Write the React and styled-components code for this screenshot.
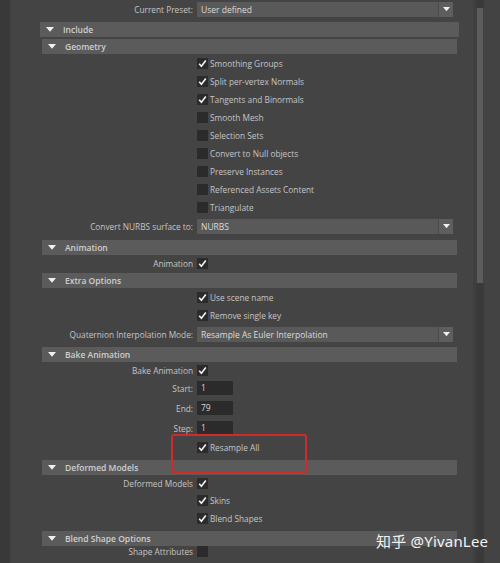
import React from "react";
import styled, { createGlobalStyle } from "styled-components";

const Global = createGlobalStyle`
  html, body { margin: 0; padding: 0; background: #444444; }
  body { font-family: "Open Sans", "Noto Sans", sans-serif; }
  * { box-sizing: border-box; }
`;

const Frame = styled.div`
  position: relative;
  width: 500px;
  height: 563px;
  display: flex;
  overflow: hidden;
  background: #444444;
`;

const LeftEdge = styled.div`
  width: 12px;
  flex: none;
  background: #393939;
  border-right: 2px solid #424242;
`;

const Main = styled.div`
  flex: 1;
  display: flex;
  flex-direction: column;
  border-right: 3px solid #3f3f3f;
`;

const ScrollTrack = styled.div`
  width: 8px;
  flex: none;
  background: #3a3a3a;
  padding-top: 8px;
  display: flex;
  flex-direction: column;
`;

const ScrollThumb = styled.div`
  height: 275px;
  background: #5c5c5c;
  border-left: 1px solid #404040;
  border-right: 1px solid #404040;
`;

const RightEdge = styled.div`
  width: 16px;
  flex: none;
  background: #434343;
`;

const Row = styled.div`
  display: flex;
  align-items: center;
  height: ${(p) => p.$h || 18}px;
  margin-top: ${(p) => p.$mt || 0}px;
  flex: none;
`;

const Label = styled.div`
  width: 185px;
  flex: none;
  text-align: right;
  padding-right: 4px;
  font-size: 8.3px;
  color: #c4c4c4;
  white-space: nowrap;
`;

const Control = styled.div`
  display: flex;
  align-items: center;
  flex: 1;
  min-width: 0;
`;

const Box = styled.span`
  width: 11px;
  height: 11px;
  flex: none;
  background: #2b2b2b;
  display: inline-flex;
  align-items: center;
  justify-content: center;
`;

const CheckText = styled.span`
  margin-left: 2px;
  font-size: 8.3px;
  color: #c4c4c4;
  white-space: nowrap;
`;

const Header = styled.div`
  height: 15px;
  flex: none;
  margin: ${(p) => p.$mt || 0}px ${(p) => (p.$outer ? 14 : 16)}px 0
    ${(p) => (p.$outer ? 28 : 30)}px;
  background: #5b5b5b;
  display: flex;
  align-items: center;
  padding-left: 6px;
  gap: 9px;
  font-size: 8.5px;
  font-weight: 600;
  color: #cfcfcf;
`;

const Dropdown = styled.div`
  width: 256px;
  height: 15px;
  display: flex;
  background: #595959;
`;

const DropText = styled.div`
  flex: 1;
  padding-left: 4px;
  font-size: 8.5px;
  line-height: 15px;
  color: #dcdcdc;
  white-space: nowrap;
  overflow: hidden;
`;

const DropBtn = styled.div`
  width: 15px;
  flex: none;
  border-left: 1px solid #4a4a4a;
  background: #5e5e5e;
  display: flex;
  align-items: center;
  justify-content: center;
`;

const Input = styled.div`
  width: 36px;
  height: 14px;
  background: #2b2b2b;
  padding-left: 4px;
  font-size: 8.5px;
  line-height: 14px;
  color: #d6d6d6;
`;

const Highlight = styled.div`
  position: absolute;
  left: 171px;
  top: 434px;
  width: 136px;
  height: 40px;
  border: 2px solid #d22a2a;
  border-radius: 3px;
`;

const Watermark = styled.div`
  position: absolute;
  left: 376px;
  top: 530px;
  font-family: "Noto Sans", "Noto Sans CJK SC", sans-serif;
  font-size: 15px;
  color: #f2f2f2;
  white-space: nowrap;
  letter-spacing: 0.2px;
`;

const Tick = () => (
  <svg width="9" height="9" viewBox="0 0 9 9">
    <path d="M1.2 4.8 L3.4 7.2 L7.8 1.6" fill="none" stroke="#f4f4f4" strokeWidth="1.6" />
  </svg>
);

const Arrow = ({ size = 8 }) => (
  <svg width={size} height={size * 0.6} viewBox="0 0 10 6">
    <path d="M0 0 L10 0 L5 6 Z" fill="#f0f0f0" />
  </svg>
);

const Check = ({ on, text }) => (
  <Control>
    <Box>{on && <Tick />}</Box>
    {text && <CheckText>{text}</CheckText>}
  </Control>
);

const CheckRow = ({ on, text, h, mt }) => (
  <Row $h={h} $mt={mt}>
    <Label />
    <Check on={on} text={text} />
  </Row>
);

const FieldRow = ({ label, children, h, mt }) => (
  <Row $h={h} $mt={mt}>
    <Label>{label}</Label>
    <Control>{children}</Control>
  </Row>
);

const Select = ({ value }) => (
  <Dropdown>
    <DropText>{value}</DropText>
    <DropBtn>
      <Arrow size={7} />
    </DropBtn>
  </Dropdown>
);

const Section = ({ title, outer, mt }) => (
  <Header $outer={outer} $mt={mt}>
    <Arrow size={8} />
    <span>{title}</span>
  </Header>
);

const geometry = [
  [true, "Smoothing Groups"],
  [true, "Split per-vertex Normals"],
  [true, "Tangents and Binormals"],
  [false, "Smooth Mesh"],
  [false, "Selection Sets"],
  [false, "Convert to Null objects"],
  [false, "Preserve Instances"],
  [false, "Referenced Assets Content"],
  [false, "Triangulate"],
];

export default function App() {
  return (
    <>
      <Global />
      <Frame>
        <LeftEdge />
        <Main>
          <FieldRow label="Current Preset:" h={18} mt={0}>
            <Select value="User defined" />
          </FieldRow>
          <Section title="Include" outer mt={4} />
          <Section title="Geometry" mt={2} />
          {geometry.map(([on, t]) => (
            <CheckRow key={t} on={on} text={t} />
          ))}
          <FieldRow label="Convert NURBS surface to:" h={20}>
            <Select value="NURBS" />
          </FieldRow>
          <Section title="Animation" mt={4} />
          <FieldRow label="Animation" h={16}>
            <Box>
              <Tick />
            </Box>
          </FieldRow>
          <Section title="Extra Options" mt={2} />
          <CheckRow on text="Use scene name" />
          <CheckRow on text="Remove single key" />
          <FieldRow label="Quaternion Interpolation Mode:" h={20}>
            <Select value="Resample As Euler Interpolation" />
          </FieldRow>
          <Section title="Bake Animation" mt={3} />
          <FieldRow label="Bake Animation" h={16}>
            <Box>
              <Tick />
            </Box>
          </FieldRow>
          <FieldRow label="Start:" h={20}>
            <Input>1</Input>
          </FieldRow>
          <FieldRow label="End:" h={20}>
            <Input>79</Input>
          </FieldRow>
          <FieldRow label="Step:" h={20}>
            <Input>1</Input>
          </FieldRow>
          <CheckRow on text="Resample All" h={18} />
          <Section title="Deformed Models" mt={4} />
          <FieldRow label="Deformed Models" h={16}>
            <Box>
              <Tick />
            </Box>
          </FieldRow>
          <CheckRow on text="Skins" />
          <CheckRow on text="Blend Shapes" />
          <Section title="Blend Shape Options" mt={4} />
          <FieldRow label="Shape Attributes" h={10}>
            <Box />
          </FieldRow>
        </Main>
        <ScrollTrack>
          <ScrollThumb />
        </ScrollTrack>
        <RightEdge />
        <Highlight />
        <Watermark>知乎 @YivanLee</Watermark>
      </Frame>
    </>
  );
}
